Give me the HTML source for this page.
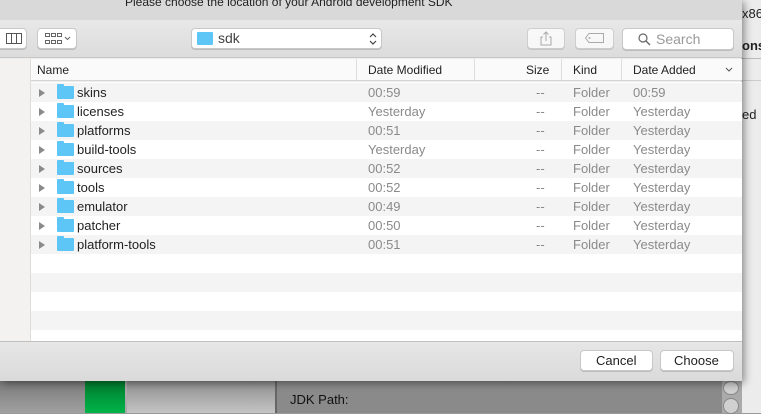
<!DOCTYPE html>
<html><head><meta charset="utf-8"><style>
*{margin:0;padding:0;box-sizing:border-box}
body{width:761px;height:413px;overflow:hidden;position:relative;background:#9a9a9a;font-family:"Liberation Sans",sans-serif;font-size:12px;color:#222}
.abs{position:absolute}
.dlg{left:0;top:0;width:742px;height:381px;background:#ececec;box-shadow:2px 2px 8px rgba(0,0,0,.45);border-right:1px solid #bbb}
.btn{position:absolute;background:#fff;border:1px solid #c8c8c8;border-radius:4px;box-shadow:0 1px 0 #bdbdbd}
.row{position:absolute;left:31px;width:711px;height:19px;font-size:13px;line-height:19px}
.row span{position:absolute}
.fold{position:absolute;left:26px;top:3px;width:17px;height:13px;background:#5ec5f7;border-radius:1px}
.fold:before{content:"";position:absolute;left:0;top:-2px;width:7px;height:3px;background:#5ec5f7;border-radius:1px 1px 0 0}
.tri{position:absolute;left:8px;top:6px;width:0;height:0;border-left:6px solid #8a8a8a;border-top:4px solid transparent;border-bottom:4px solid transparent}
.g{color:#8a8a8a}
</style></head><body>
<div class="abs" style="left:742px;top:0;width:19px;height:413px;background:#ececec"></div>
<div class="abs" style="left:742px;top:6px;font-size:13px">x86</div>
<div class="abs" style="left:742px;top:38px;font-size:13px;font-weight:bold">ons</div>
<div class="abs" style="left:742px;top:58px;width:19px;height:1px;background:#bbb"></div>
<div class="abs" style="left:742px;top:80px;width:19px;height:1px;background:#ccc"></div>
<div class="abs" style="left:742px;top:107px;font-size:13px">ed</div>
<div class="abs" style="left:0;top:381px;width:85px;height:32px;background:linear-gradient(#7a7a7a,#a0a0a0)"></div>
<div class="abs" style="left:85px;top:381px;width:40px;height:32px;background:linear-gradient(#007a2e,#00b548)"></div>
<div class="abs" style="left:125px;top:381px;width:150px;height:32px;background:linear-gradient(#8e8e8e,#c4c4c4);border-left:2px solid #aaa"></div>
<div class="abs" style="left:275px;top:381px;width:447px;height:32px;background:#8a8a8a;border-left:2px solid #666"></div>
<div class="abs" style="left:290px;top:392px;font-size:13px;color:#111">JDK Path:</div>
<div class="abs" style="left:722px;top:381px;width:20px;height:32px;background:#aaa"></div>
<div class="abs" style="left:723px;top:381px;width:16px;height:14px;border:1px solid #888;border-radius:50%;background:#d0d0d0"></div>
<div class="abs" style="left:723px;top:398px;width:16px;height:16px;border:1px solid #888;border-radius:50%;background:#d0d0d0"></div>

<div class="abs dlg">
 <div class="abs" style="left:0;top:0;width:742px;height:20px;background:#d9d9d9"></div>
 <div class="abs" style="left:125px;top:-5px;font-size:12px;color:#222">Please choose the location of your Android development SDK</div>
 <div class="abs" style="left:0;top:20px;width:742px;height:38px;background:linear-gradient(#e8e8e8,#dcdcdc);border-bottom:1px solid #c6c6c6"></div>
 <div class="btn" style="left:-5px;top:28px;width:32px;height:21px;border-left:3px solid #666"></div>
 <svg class="abs" style="left:6px;top:33px" width="16" height="11"><rect x=".5" y=".5" width="15" height="10" fill="none" stroke="#555"/><line x1="5.5" y1="0" x2="5.5" y2="11" stroke="#555"/><line x1="10.5" y1="0" x2="10.5" y2="11" stroke="#555"/></svg>
 <div class="btn" style="left:37px;top:28px;width:40px;height:21px"></div>
 <svg class="abs" style="left:45px;top:33px" width="28" height="12"><g fill="none" stroke="#666"><rect x=".5" y=".5" width="4" height="3"/><rect x="6.5" y=".5" width="4" height="3"/><rect x="12.5" y=".5" width="4" height="3"/><rect x=".5" y="7.5" width="4" height="3"/><rect x="6.5" y="7.5" width="4" height="3"/><rect x="12.5" y="7.5" width="4" height="3"/><path d="M20 4l2.5 2.5L25 4"/></g></svg>
 <div class="btn" style="left:191px;top:28px;width:191px;height:21px"></div>
 <div class="abs" style="left:197px;top:32px;width:16px;height:13px;background:#5ec5f7;border-radius:1px"></div>
 <div class="abs" style="left:218px;top:30px;font-size:14px;color:#444">sdk</div>
 <svg class="abs" style="left:369px;top:32px" width="8" height="14"><path d="M1 5l3-3 3 3M1 9l3 3 3-3" fill="none" stroke="#444" stroke-width="1.2"/></svg>
 <div class="btn" style="left:527px;top:28px;width:38px;height:21px;opacity:.75"></div>
 <svg class="abs" style="left:539px;top:31px" width="14" height="15"><path d="M4 6H2v8h10V6h-2M7 10V1M4.5 3.5L7 1l2.5 2.5" fill="none" stroke="#aaa"/></svg>
 <div class="btn" style="left:575px;top:28px;width:39px;height:21px;opacity:.75"></div>
 <svg class="abs" style="left:585px;top:33px" width="20" height="10"><path d="M4 .5h14.5v9H4L.5 5z" fill="none" stroke="#aaa"/><circle cx="4.5" cy="5" r="1" fill="#aaa"/></svg>
 <div class="btn" style="left:622px;top:28px;width:112px;height:22px"></div>
 <svg class="abs" style="left:638px;top:33px" width="13" height="13"><circle cx="5" cy="5" r="4" fill="none" stroke="#666" stroke-width="1.2"/><path d="M8 8l4 4" stroke="#666" stroke-width="1.4"/></svg>
 <div class="abs" style="left:656px;top:31px;font-size:14px;color:#999">Search</div>

 <div class="abs" style="left:0;top:59px;width:31px;height:282px;background:#f4f2f0;border-right:1px solid #ddd"></div>
 <div class="abs" style="left:31px;top:59px;width:711px;height:22px;background:#fafafa;border-bottom:1px solid #d5d5d5"></div>
 <div class="abs" style="left:37px;top:63px">Name</div>
 <div class="abs" style="left:356px;top:59px;width:1px;height:21px;background:#ddd"></div>
 <div class="abs" style="left:368px;top:63px">Date Modified</div>
 <div class="abs" style="left:474px;top:59px;width:1px;height:21px;background:#ddd"></div>
 <div class="abs" style="left:526px;top:63px">Size</div>
 <div class="abs" style="left:561px;top:59px;width:1px;height:21px;background:#ddd"></div>
 <div class="abs" style="left:573px;top:63px">Kind</div>
 <div class="abs" style="left:621px;top:59px;width:1px;height:21px;background:#ddd"></div>
 <div class="abs" style="left:633px;top:63px">Date Added</div>
 <svg class="abs" style="left:725px;top:67px" width="8" height="5"><path d="M1 1l3 3 3-3" fill="none" stroke="#555"/></svg>

 <div class="abs" style="left:31px;top:82px;width:711px;height:259px;background:#fff"></div>
 <div id="rows"></div>
 <div class="abs" style="left:0;top:341px;width:742px;height:40px;background:linear-gradient(#e6e6e6,#dadada);border-top:1px solid #c0c0c0"></div>
 <div class="btn" style="left:580px;top:350px;width:73px;height:21px"></div>
 <div class="abs" style="left:596px;top:353px;font-size:13px">Cancel</div>
 <div class="btn" style="left:660px;top:350px;width:74px;height:21px"></div>
 <div class="abs" style="left:674px;top:353px;font-size:13px">Choose</div>
</div>
<script>
var d=[["skins","00:59","00:59"],["licenses","Yesterday","Yesterday"],["platforms","00:51","Yesterday"],["build-tools","Yesterday","Yesterday"],["sources","00:52","Yesterday"],["tools","00:52","Yesterday"],["emulator","00:49","Yesterday"],["patcher","00:50","Yesterday"],["platform-tools","00:51","Yesterday"]];
var h="";
for(var i=0;i<13;i++){var t=83+i*19,bg=i%2==0?"#f4f4f4":"#fff";
h+='<div class="row" style="top:'+t+'px;background:'+bg+'">';
if(d[i]){h+='<div class="tri"></div><div class="fold"></div><span style="left:46px">'+d[i][0]+'</span><span class="g" style="left:337px">'+d[i][1]+'</span><span class="g" style="left:505px">--</span><span class="g" style="left:542px">Folder</span><span class="g" style="left:602px">'+d[i][2]+'</span>';}
h+='</div>';}
document.getElementById("rows").outerHTML=h;
</script>
</body></html>
